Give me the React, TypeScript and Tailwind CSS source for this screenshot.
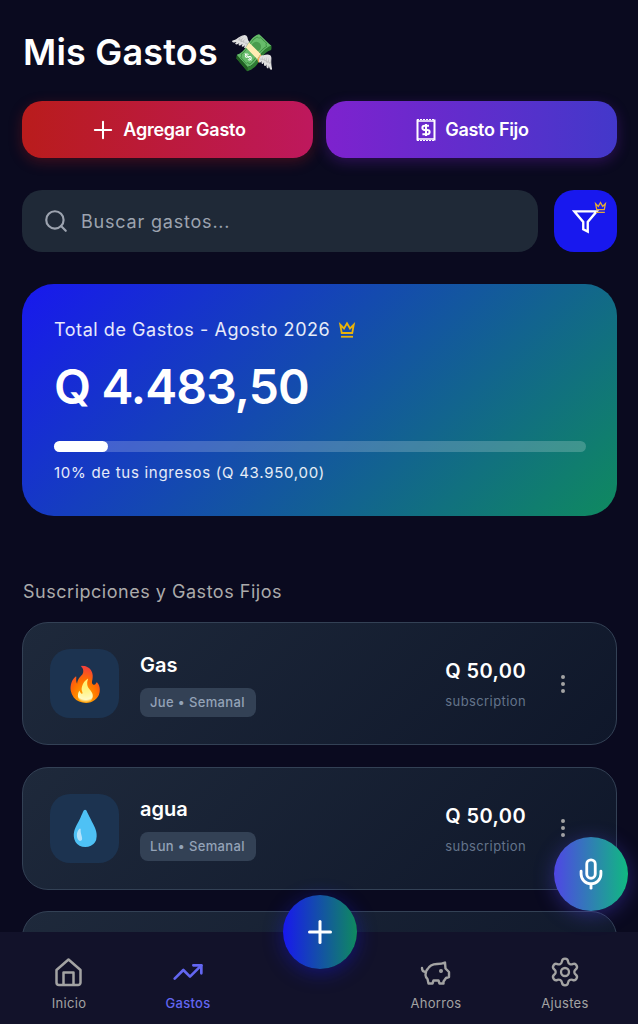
import { Mic, MoreVertical, Plus, Search, Settings, TrendingUp } from "lucide-react";
import type { ReactNode } from "react";

const font = { fontFamily: "Inter, sans-serif" };

const CrownIcon = ({ className }: { className: string }) => (
  <svg viewBox="0 0 24 24" fill="none" stroke="currentColor" strokeWidth="2.4" className={className}>
    <path d="M3 5l5 5 4-7 4 7 5-5-2 11H5z" />
    <path d="M4 21h16" />
  </svg>
);

const FunnelIcon = () => (
  <svg viewBox="0 0 24 24" fill="none" stroke="currentColor" strokeWidth="2.1" className="h-[27px] w-[27px] text-white">
    <polygon points="22 3 2 3 10 12.46 10 19 14 21 14 12.46 22 3" />
  </svg>
);

const BillIcon = () => (
  <svg viewBox="0 0 24 24" fill="none" stroke="currentColor" className="h-6 w-6 text-white">
    <path d="M3.5 1.5v21M20.5 1.5v21" strokeWidth="2" />
    <path d="M3 1.5h18M3 22.5h18" strokeWidth="1.2" strokeDasharray="2 1" />
    <path d="M3 3h18M3 21h18" strokeWidth="1.4" />
    <g transform="translate(4.8 4.8) scale(0.6)" strokeWidth="3.4">
      <path d="M12 2v20" />
      <path d="M17 5H9.5a3.5 3.5 0 0 0 0 7h5a3.5 3.5 0 0 1 0 7H6" />
    </g>
  </svg>
);

const HomeIcon = () => (
  <svg viewBox="13 6 32 32" fill="none" stroke="currentColor" strokeWidth="2.5" strokeLinejoin="round" className="h-[32px] w-[32px] text-[#a3a3a3]">
    <path d="M28.5 9.5L16.5 20v12.5a2.5 2.5 0 0 0 2.5 2.5h19a2.5 2.5 0 0 0 2.5-2.5V20z" />
    <path d="M23.5 35V22.5h10V35" />
  </svg>
);

const PigIcon = () => (
  <svg viewBox="10 6 32 32" fill="none" stroke="currentColor" strokeWidth="2.4" strokeLinejoin="round" strokeLinecap="round" className="h-[32px] w-[32px] text-[#a3a3a3]">
    <path d="M12 18c0 3 2 4 4 4" />
    <path d="M17 20c2-4 6-6 10-6 3 0 5 0 8-1.500l.5 6 3.500 3.500v5l-3 1-2.500 3.500v2h-4l-1-3h-5l-1 3h-4l-1-4.500c-2-2-3-5-0.500-9.500z" />
    <circle cx="31" cy="21" r="0.8" fill="currentColor" />
  </svg>
);

const FixedCard = ({ emoji, name, day }: { emoji: string; name: string; day: string }) => {
  return (
    <div className="flex h-[123px] shrink-0 items-center rounded-[26px] border border-[#334155] bg-[linear-gradient(135deg,#1e293b,#0f172a)] pl-[27px] pr-[41px]">
      <div className="flex h-[69px] w-[69px] items-center justify-center rounded-[20px] bg-[#1c3350] text-[34px] leading-none">
        {emoji}
      </div>
      <div className="ml-[21px] flex-1">
        <p className="text-[20px] leading-[28px] font-semibold text-white">{name}</p>
        <span className="mt-[9px] block w-fit rounded-lg bg-[#334155] py-[6px] pl-[10px] pr-[11px] text-[13px] leading-[17px] font-medium tracking-[0.35px] text-[#94a3b8]">
          {day} • Semanal
        </span>
      </div>
      <div className="text-right">
        <p className="text-[20px] leading-[28px] font-semibold tracking-[0.4px] text-white">Q 50,00</p>
        <p className="mt-[7px] text-[13px] leading-[18px] tracking-[0.4px] text-[#64748b]">subscription</p>
      </div>
      <MoreVertical className="ml-[25px] h-6 w-6 shrink-0 text-[#a3a3a3]" strokeWidth={2} />
    </div>
  );
};

const NavItem = ({ label, active, children, className }: { label: string; active?: boolean; children: ReactNode; className: string }) => {
  return (
    <div className={`absolute top-[24px] flex w-[80px] flex-col items-center ${className}`}>
      {children}
      <span className={`mt-[6px] text-[13px] leading-[18px] tracking-[0.3px] ${active ? "font-medium text-[#6366f1]" : "text-[#a3a3a3]"}`}>
        {label}
      </span>
    </div>
  );
};

const App = () => {
  return (
    <div style={font} className="relative h-[1024px] w-[638px] overflow-hidden bg-[#0a0a1f]">
      <div className="flex flex-col pl-[22px] pr-[21px] pt-[28px]">
        <h1 className="ml-[1px] text-[36px] leading-[48px] font-semibold tracking-[0.2px] text-white">
          Mis Gastos <span className="ml-[3px]">💸</span>
        </h1>

        <div className="mt-[25px] flex gap-[13px]">
          <button className="flex h-[57px] flex-1 items-center justify-center gap-[6px] rounded-[20px] bg-[linear-gradient(90deg,#b91c1c,#be185d)] text-[18px] font-semibold tracking-[-0.25px] text-white shadow-[0_4px_14px_rgba(185,28,28,0.3)]">
            <Plus className="h-7 w-7" strokeWidth={1.75} />
            Agregar Gasto
          </button>
          <button className="flex h-[57px] flex-1 items-center justify-center gap-[7px] rounded-[20px] bg-[linear-gradient(90deg,#7e22ce,#4338ca)] text-[18px] font-semibold tracking-[-0.3px] text-white shadow-[0_4px_14px_rgba(126,34,206,0.3)]">
            <BillIcon />
            Gasto Fijo
          </button>
        </div>

        <div className="mt-[32px] flex gap-[16px]">
          <div className="flex h-[62px] flex-1 items-center rounded-[20px] bg-[#1f2937] pl-[21px]">
            <Search className="h-[26px] w-[26px] text-[#9ca3af]" strokeWidth={2} />
            <span className="ml-[12px] text-[18px] tracking-[0.8px] text-[#9ca3af]">Buscar gastos...</span>
          </div>
          <div className="relative flex h-[62px] w-[63px] items-center justify-center rounded-[20px] bg-[#1818ee]">
            <FunnelIcon />
            <CrownIcon className="absolute top-[11px] right-[10px] h-[13px] w-[13px] text-[#e0a93a]" />
          </div>
        </div>

        <div className="mt-[32px] h-[232px] rounded-[32px] bg-[linear-gradient(135deg,#1818ee,#0f8a5f)] pl-[32px] pr-[31px] pt-[32px]">
          <div className="flex items-center gap-[8px]">
            <span className="text-[18px] leading-[28px] tracking-[0.55px] text-white/90">Total de Gastos - Agosto 2026</span>
            <CrownIcon className="h-[18px] w-[18px] text-[#eab308]" />
          </div>
          <p className="mt-[15px] text-[48px] leading-[56px] font-semibold tracking-[-0.9px] text-white">Q 4.483,50</p>
          <div className="mt-[26px] h-[11px] rounded-full bg-white/20">
            <div className="h-[11px] w-[54px] rounded-full bg-white" />
          </div>
          <p className="mt-[10px] text-[15px] leading-[22px] tracking-[0.72px] text-white/90">10% de tus ingresos (Q 43.950,00)</p>
        </div>

        <h2 className="mt-[62px] ml-[1px] text-[18px] leading-[28px] tracking-[0.52px] text-[#ababab]">Suscripciones y Gastos Fijos</h2>

        <div className="mt-[16px] flex flex-col gap-[21.5px]">
          <FixedCard emoji="🔥" name="Gas" day="Jue" />
          <FixedCard emoji="💧" name="agua" day="Lun" />
          {/* next card is hidden behind the nav, only its top edge shows */}
          <div className="h-[123px] shrink-0 rounded-[26px] border border-[#334155] bg-[linear-gradient(135deg,#1e293b,#0f172a)]" />
        </div>
      </div>

      <nav className="absolute right-0 bottom-0 left-0 h-[92px] bg-[#12122a]">
        <NavItem label="Inicio" className="left-[29px]">
          <HomeIcon />
        </NavItem>
        <NavItem label="Gastos" active className="left-[148px]">
          <TrendingUp className="h-[32px] w-[32px] text-[#6366f1]" strokeWidth={2} />
        </NavItem>
        <NavItem label="Ahorros" className="left-[396px]">
          <PigIcon />
        </NavItem>
        <NavItem label="Ajustes" className="left-[525px]">
          <Settings className="h-[32px] w-[32px] text-[#a3a3a3]" strokeWidth={1.75} />
        </NavItem>
      </nav>

      <div className="absolute top-[895px] left-[283px] flex h-[74px] w-[74px] items-center justify-center rounded-full bg-[linear-gradient(90deg,#1818ee,#0f8a5f)] shadow-[0_4px_20px_rgba(24,24,238,0.4)]">
        <Plus className="h-9 w-9 text-white" strokeWidth={2} />
      </div>
      <div className="absolute top-[837px] left-[554px] flex h-[74px] w-[74px] items-center justify-center rounded-full bg-[linear-gradient(90deg,#4f46e5,#10b981)] shadow-[0_4px_20px_rgba(79,70,229,0.4)]">
        <Mic className="h-[34px] w-[34px] text-white" strokeWidth={2} />
      </div>
    </div>
  );
};

export default App;
